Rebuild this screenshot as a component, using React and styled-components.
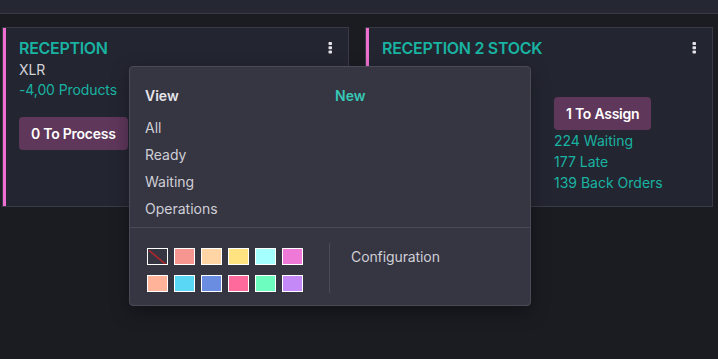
import React from 'react';
import styled, { createGlobalStyle } from 'styled-components';

const GlobalStyle = createGlobalStyle`
  html, body {
    margin: 0;
    background: #1b1c22;
    font-family: Inter, "Noto Sans", sans-serif;
    -webkit-font-smoothing: antialiased;
  }
`;

const teal = '#19b3a1';

const Page = styled.div`
  position: relative;
  height: 359px;
  overflow: hidden;
`;

const TopStrip = styled.div`
  height: 13px;
  background: #252733;
  border-bottom: 1px solid #383a46;
`;

const Board = styled.div`
  display: grid;
  grid-template-columns: 347px 348px;
  column-gap: 16px;
  padding: 13px 0 0 2px;
`;

const Card = styled.div`
  height: 180px;
  box-sizing: border-box;
  background: #232531;
  border: 1px solid #383a46;
  box-shadow: inset 3px 0 0 ${p => p.$accent};
  padding: 8px 16px;
`;

const CardHeader = styled.div`
  display: flex;
  align-items: flex-start;
  justify-content: space-between;
`;

const Title = styled.div`
  color: ${teal};
  font-size: 16px;
  font-weight: 600;
  line-height: 24px;
  letter-spacing: -0.3px;
`;

const MenuButton = styled.span`
  display: flex;
  padding-top: 6px;
  margin-right: -1px;
`;

const Columns = styled.div`
  display: grid;
  grid-template-columns: 172px 1fr;
`;

const Column = styled.div`
  display: flex;
  flex-direction: column;
  align-items: flex-start;
  padding-top: ${p => p.$offset || 0}px;
`;

const Sub = styled.div`
  color: ${p => (p.$accent ? teal : '#d4d4d8')};
  font-size: 14px;
  line-height: 20px;
  letter-spacing: -0.1px;
`;

const Action = styled.button`
  margin-top: ${p => p.$gap || 0}px;
  border: 0;
  border-radius: 4px;
  background: #5f375b;
  color: #ffffff;
  font-family: inherit;
  font-size: 14px;
  font-weight: 600;
  line-height: 21px;
  letter-spacing: -0.25px;
  padding: 6px 12px;
  white-space: nowrap;
`;

const StatLink = styled.div`
  color: ${teal};
  font-size: 14px;
  line-height: 21px;
`;

const Dropdown = styled.div`
  position: absolute;
  left: 129px;
  top: 66px;
  width: 402px;
  height: 240px;
  box-sizing: border-box;
  background: #363542;
  border: 1px solid #4b4b58;
  border-radius: 4px;
  box-shadow: 0 6px 18px rgba(0, 0, 0, 0.35);
  display: flex;
  flex-direction: column;
`;

const MenuTop = styled.div`
  display: grid;
  grid-template-columns: 190px 1fr;
  padding: 19px 15px 5px;
  border-bottom: 1px solid #4b4b58;
`;

const MenuHeading = styled.div`
  color: ${p => (p.$accent ? '#37c9b6' : '#e6e6ea')};
  font-size: 14px;
  font-weight: 600;
  line-height: 20px;
  margin-bottom: 8px;
`;

const MenuItem = styled.div`
  color: #cfcfd6;
  font-size: 14px;
  line-height: 27px;
`;

const MenuBottom = styled.div`
  display: flex;
  padding: 15px 15px 0 17px;
`;

const Swatches = styled.div`
  display: grid;
  grid-template-columns: repeat(6, 21px);
  grid-auto-rows: 17px;
  gap: 10px 6px;
  padding-top: 5px;
`;

const Swatch = styled.span`
  box-sizing: border-box;
  border: 1px solid #ffffff;
  background: ${p => p.$color};
  overflow: hidden;
  display: block;
`;

const VLine = styled.div`
  width: 1px;
  height: 50px;
  background: #4b4b58;
  margin: 0 21px 0 26px;
`;

const ConfigLink = styled.div`
  color: #cfcfd6;
  font-size: 14px;
  line-height: 20px;
  letter-spacing: -0.1px;
  padding-top: 4px;
`;

const Dots = () => (
  <svg width="5" height="12" viewBox="0 0 5 12">
    <rect x="0.5" y="0" width="3.5" height="3" rx="0.8" fill="#e4e4e8" />
    <rect x="0.5" y="4.3" width="3.5" height="3" rx="0.8" fill="#e4e4e8" />
    <rect x="0.5" y="8.6" width="3.5" height="3" rx="0.8" fill="#e4e4e8" />
  </svg>
);

const NoColor = () => (
  <svg width="19" height="15" viewBox="0 0 19 15">
    <line x1="1" y1="0.5" x2="18" y2="14.5" stroke="#b0262a" strokeWidth="1.6" />
  </svg>
);

const colors = [
  null, '#f79591', '#ffd5a6', '#ffe381', '#a6ffff', '#ee79d7',
  '#ffb398', '#5bd7f6', '#6a8de2', '#ff6a9c', '#6dfdbf', '#c588f7',
];

const App = () => (
  <Page>
    <GlobalStyle />
    <TopStrip />
    <Board>
      <Card $accent="#ee6fcf">
        <CardHeader>
          <Title>RECEPTION</Title>
          <MenuButton><Dots /></MenuButton>
        </CardHeader>
        <Columns>
          <Column>
            <Sub>XLR</Sub>
            <Sub $accent>-4,00 Products</Sub>
            <Action $gap={17}>0 To Process</Action>
          </Column>
          <Column />
        </Columns>
      </Card>
      <Card $accent="#ee6fcf">
        <CardHeader>
          <Title>RECEPTION 2 STOCK</Title>
          <MenuButton><Dots /></MenuButton>
        </CardHeader>
        <Columns>
          <Column />
          <Column $offset={37}>
            <Action>1 To Assign</Action>
            <StatLink>224 Waiting</StatLink>
            <StatLink>177 Late</StatLink>
            <StatLink>139 Back Orders</StatLink>
          </Column>
        </Columns>
      </Card>
    </Board>

    <Dropdown>
      <MenuTop>
        <div>
          <MenuHeading>View</MenuHeading>
          <MenuItem>All</MenuItem>
          <MenuItem>Ready</MenuItem>
          <MenuItem>Waiting</MenuItem>
          <MenuItem>Operations</MenuItem>
        </div>
        <div>
          <MenuHeading $accent>New</MenuHeading>
        </div>
      </MenuTop>
      <MenuBottom>
        <Swatches>
          {colors.map((c, i) => (
            <Swatch key={i} $color={c || '#363542'}>
              {c ? null : <NoColor />}
            </Swatch>
          ))}
        </Swatches>
        <VLine />
        <ConfigLink>Configuration</ConfigLink>
      </MenuBottom>
    </Dropdown>
  </Page>
);

export default App;
